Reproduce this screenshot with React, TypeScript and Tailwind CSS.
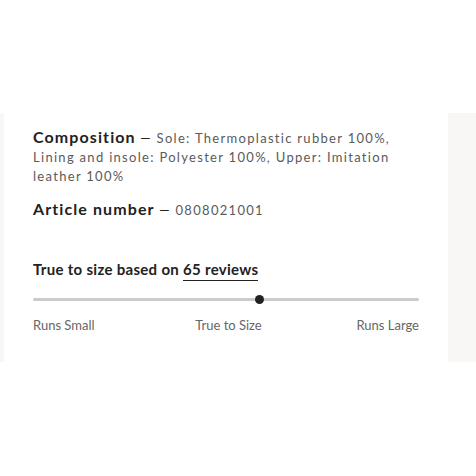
import React from "react";

export default function App() {
  return (
    <div className="w-[476px] h-[476px] bg-white" style={{ fontFamily: "Lato, 'Noto Sans', sans-serif" }}>
      <div className="h-[113px]" />
      <div className="flex h-[249px]">
        <div className="w-[4px] bg-[#f8f7f6]" />
        <div className="flex-1 bg-white pl-[29px] pr-[29px]">
          <div className="pt-[14px]">
            <p className="text-[13px] leading-[19px] tracking-[1.3px] text-[#5a5a5a]">
              <span className="text-[16px] font-bold tracking-[1.1px] text-[#222]">Composition</span>
              <span className="text-[#222]"> — </span>
              Sole: Thermoplastic rubber 100%, Lining and insole: Polyester 100%, Upper: Imitation leather 100%
            </p>
            <p className="mt-[13px] text-[13px] leading-[19px] tracking-[1.3px] text-[#5a5a5a]">
              <span className="text-[16px] font-bold tracking-[1.1px] text-[#222]">Article number</span>
              <span className="text-[#222]"> — </span>
              0808021001
            </p>
          </div>
          <div className="mt-[40px]">
            <p className="text-[15px] font-bold leading-[19px] tracking-[0.3px] text-[#222]">
              True to size based on{" "}
              <span className="border-b border-[#222] pb-[2px]">65 reviews</span>
            </p>
            <div className="relative mt-[19px] h-[3px] w-[386px] rounded-full bg-[#cbcbcb]">
              <div className="absolute left-[222px] top-[-3px] h-[9px] w-[9px] rounded-full bg-[#222]" />
            </div>
            <div className="mt-[16px] flex w-[386px] justify-between text-[13px] leading-[16px] text-[#666]">
              <span>Runs Small</span>
              <span className="mr-[-6px]">True to Size</span>
              <span>Runs Large</span>
            </div>
          </div>
        </div>
        <div className="w-[28px] bg-[#f8f7f6]" />
      </div>
    </div>
  );
}
